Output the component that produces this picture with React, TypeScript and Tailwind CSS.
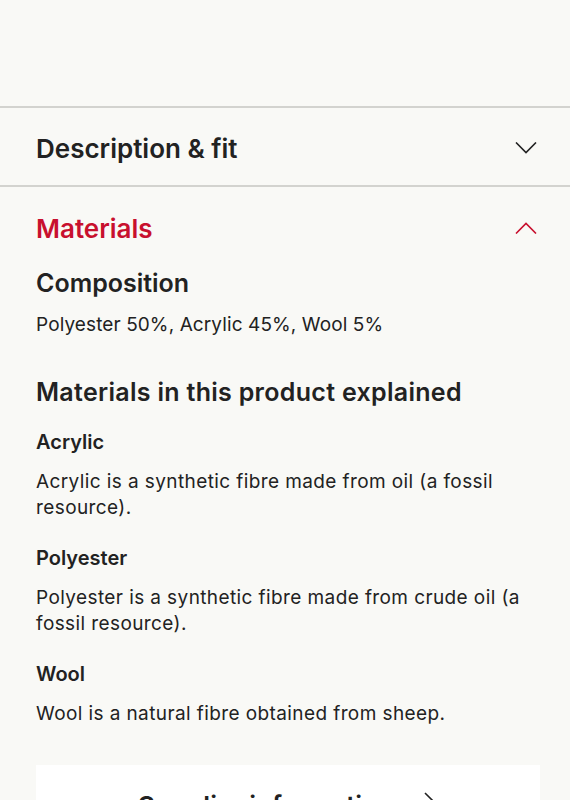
import React from "react";

const Chevron = ({ up, color }: { up?: boolean; color: string }) => (
  <svg width="22" height="12" viewBox="0 0 22 12" fill="none">
    <path
      d={up ? "M1 11.5 L11 1.5 L21 11.5" : "M1 0.5 L11 10.5 L21 0.5"}
      stroke={color}
      strokeWidth="1.6"
    />
  </svg>
);

export default function App() {
  return (
    <div
      className="min-h-[800px] w-[570px] overflow-hidden bg-[#f9f9f6] text-[#222222]"
      style={{ fontFamily: "Inter, Lato, sans-serif" }}
    >
      <div className="h-[108px] border-b-2 border-[#d3d3cf]" />
      <div className="flex h-[79px] items-center justify-between border-b-2 border-[#d3d3cf] pl-[36px] pr-[33px] pt-[3px]">
        <span className="text-[26px] font-semibold">Description &amp; fit</span>
        <Chevron color="#222222" />
      </div>
      <div className="flex h-[81px] items-center justify-between pl-[36px] pr-[33px] pt-[1px]">
        <span className="text-[26px] font-semibold text-[#c8102e]">Materials</span>
        <Chevron up color="#c8102e" />
      </div>
      <div className="pl-[36px] pr-[30px]">
        <h3 className="text-[25px] font-semibold leading-[30px]">Composition</h3>
        <p className="mt-[14px] text-[19px] leading-[26px] tracking-[0.1px]">Polyester 50%, Acrylic 45%, Wool 5%</p>
        <h3 className="mt-[38px] text-[25px] font-semibold leading-[32px] tracking-[0.3px]">Materials in this product explained</h3>
        <h4 className="mt-[21px] text-[20px] font-semibold leading-[26px]">Acrylic</h4>
        <p className="mt-[14px] pr-[6px] text-[19px] leading-[26px] tracking-[0.4px]">
          Acrylic is a synthetic fibre made from oil (a fossil resource).
        </p>
        <h4 className="mt-[24px] text-[20px] font-semibold leading-[26px]">Polyester</h4>
        <p className="mt-[14px] pr-[6px] text-[19px] leading-[26px] tracking-[0.4px]">
          Polyester is a synthetic fibre made from crude oil (a fossil resource).
        </p>
        <h4 className="mt-[24px] text-[20px] font-semibold leading-[26px]">Wool</h4>
        <p className="mt-[14px] text-[19px] leading-[26px] tracking-[0.4px]">Wool is a natural fibre obtained from sheep.</p>
        <div className="mt-[38px] flex h-[80px] items-center justify-center gap-[30px] bg-white">
          <span className="text-[26px] font-semibold">Supplier information</span>
          <svg width="14" height="26" viewBox="0 0 14 26" fill="none">
            <path d="M1 1 L13 13 L1 25" stroke="#222222" strokeWidth="1.6" />
          </svg>
        </div>
      </div>
    </div>
  );
}
